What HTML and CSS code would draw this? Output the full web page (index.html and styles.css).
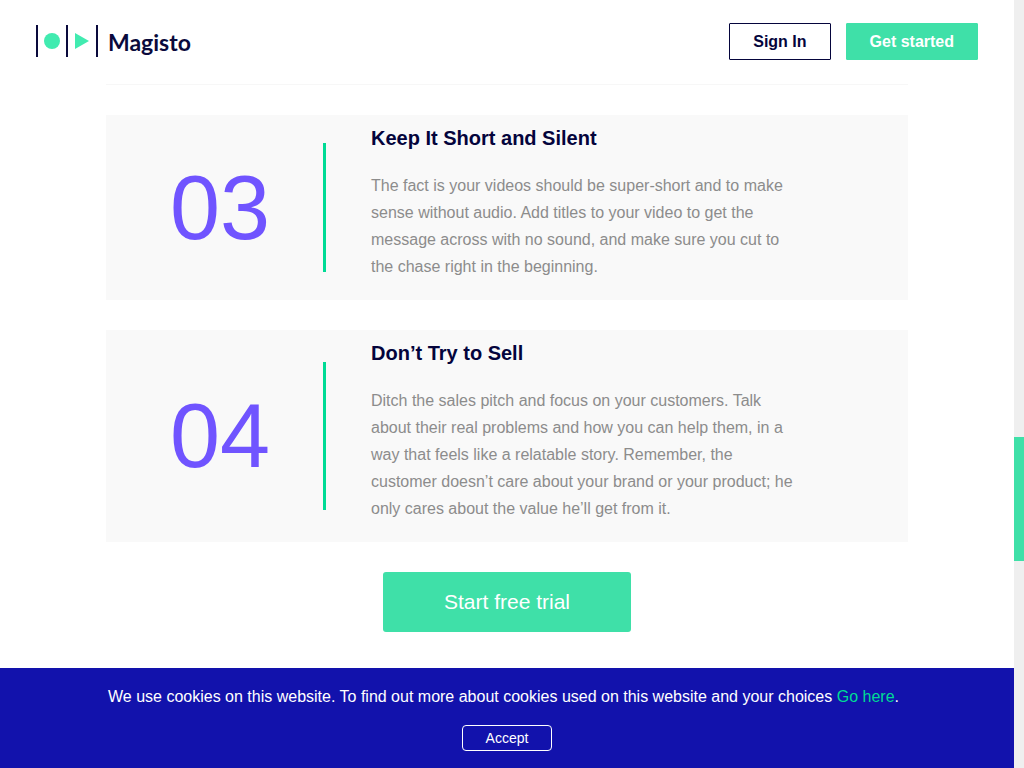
FILE: index.html
```html
<!DOCTYPE html>
<html lang="en">
<head>
<meta charset="utf-8">
<meta name="viewport" content="width=device-width, initial-scale=1">
<title>Magisto</title>
<link rel="stylesheet" href="styles.css">
</head>
<body class="page">
<div class="content">
  <header class="header">
    <a class="logo" href="#">
      <svg class="logo-mark" width="63" height="33" viewBox="0 0 63 33" aria-hidden="true">
        <path d="M1 0V32M31 0V32M61 0V32" stroke="#0a0a3c" stroke-width="2"/>
        <circle cx="16" cy="16" r="8" fill="#41ebb0"/>
        <path d="M39 8L53 16L39 24Z" fill="#41ebb0"/>
      </svg>
      <span class="logo-name">Magisto</span>
    </a>
    <nav class="nav">
      <button class="button button-outline" type="button">Sign In</button>
      <button class="button button-solid" type="button">Get started</button>
    </nav>
  </header>
  <main class="main">
    <article class="tip">
      <div class="tip-number">03</div>
      <div class="tip-divider"></div>
      <div class="tip-body">
        <h2 class="tip-title">Keep It Short and Silent</h2>
        <p class="tip-text">The fact is your videos should be super-short and to make sense without audio. Add titles to your video to get the message across with no sound, and make sure you cut to the chase right in the beginning.</p>
      </div>
    </article>
    <article class="tip">
      <div class="tip-number">04</div>
      <div class="tip-divider"></div>
      <div class="tip-body">
        <h2 class="tip-title">Don’t Try to Sell</h2>
        <p class="tip-text">Ditch the sales pitch and focus on your customers. Talk about their real problems and how you can help them, in a way that feels like a relatable story. Remember, the customer doesn’t care about your brand or your product; he only cares about the value he’ll get from it.</p>
      </div>
    </article>
    <button class="trial" type="button">Start free trial</button>
  </main>
  <footer class="cookies">
    <p class="cookies-text">We use cookies on this website. To find out more about cookies used on this website and your choices <a class="cookies-link" href="#">Go here</a>.</p>
    <button class="accept" type="button">Accept</button>
  </footer>
</div>
<div class="scroll-track"><div class="scroll-thumb"></div></div>
</body>
</html>
```
FILE: styles.css
```css
* {
  box-sizing: border-box;
}

.page {
  margin: 0;
  min-height: 100vh;
  display: grid;
  grid-template-columns: 1fr 10px;
  background: #fff;
  color: #04043c;
  font-family: "Liberation Sans", Arial, sans-serif;
  font-size: 16px;
}

.content {
  display: flex;
  flex-direction: column;
}

.header {
  display: flex;
  align-items: center;
  justify-content: space-between;
  padding: 23px 36px 24px;
}

.logo {
  display: flex;
  align-items: center;
  gap: 9px;
  color: #0a0a3c;
  text-decoration: none;
}

.logo-mark {
  display: block;
}

.logo-name {
  font-family: Lato, sans-serif;
  font-size: 23px;
  font-weight: 700;
}

.nav {
  display: flex;
  gap: 15px;
}

.button {
  height: 37px;
  padding: 0 23px;
  border: 1px solid;
  border-radius: 1px;
  font: bold 16px "Liberation Sans", Arial, sans-serif;
}

.button-outline {
  border-color: #04043c;
  background: #fff;
  color: #04043c;
}

.button-solid {
  border-color: #3fe0a8;
  background: #3fe0a8;
  color: #fff;
}

.main {
  flex: 1;
  display: flex;
  flex-direction: column;
  align-items: center;
  gap: 30px;
  width: 100%;
  max-width: 802px;
  margin: 0 auto;
  padding: 30px 0 35px;
  border-top: 1px solid #f7f7f7;
}

.tip {
  display: grid;
  grid-template-columns: 217px 3px 1fr;
  align-items: center;
  width: 100%;
  background: #f9f9f9;
}

.tip-number {
  padding-left: 64px;
  color: #7054ff;
  font-size: 90px;
  line-height: 100px;
}

.tip-divider {
  height: 70%;
  background: #00db95;
}

.tip-body {
  padding: 8px 45px 20px;
}

.tip-title {
  margin: 0 0 19px;
  font-size: 20px;
  line-height: 30px;
}

.tip-text {
  max-width: 430px;
  margin: 0;
  color: #8c8c8c;
  line-height: 27px;
}

.trial {
  height: 60px;
  padding: 0 61px;
  border: 0;
  border-radius: 3px;
  background: #3fe0a8;
  color: #fff;
  font: 21px "Liberation Sans", Arial, sans-serif;
}

.cookies {
  display: flex;
  flex-direction: column;
  align-items: center;
  gap: 18px;
  padding: 19px 16px 17px;
  background: #1212ac;
  color: #fff;
}

.cookies-text {
  width: 100%;
  max-width: 798px;
  margin: 0;
  line-height: 20px;
}

.cookies-link {
  color: #00db95;
  text-decoration: none;
}

.accept {
  width: 90px;
  height: 26px;
  padding: 0;
  border: 1px solid #fff;
  border-radius: 4px;
  background: transparent;
  color: #fff;
  font: 14px "Liberation Sans", Arial, sans-serif;
}

.scroll-track {
  display: grid;
  grid-template-rows: 437fr 124fr 207fr;
  background: #efefef;
}

.scroll-thumb {
  grid-row: 2;
  background: #3fe0a8;
}
```
